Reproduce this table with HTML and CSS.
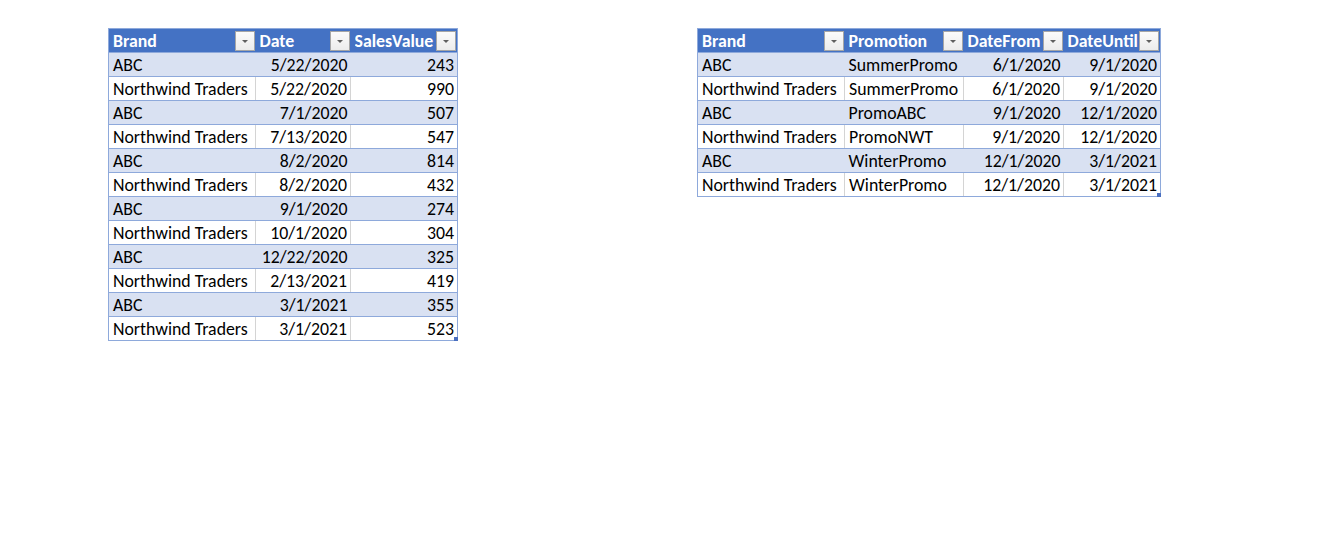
FILE: index.html
```html
<!DOCTYPE html>
<html>
<head>
<meta charset="utf-8">
<link rel="stylesheet" href="styles.css">
</head>
<body>
<div class="sheet">
  <div class="tbl-wrap t1">
    <table class="xl">
      <colgroup><col class="c147"><col class="c95"><col class="c107"></colgroup>
      <thead>
        <tr><th><span>Brand</span><i class="dd"></i></th><th><span>Date</span><i class="dd"></i></th><th><span>SalesValue</span><i class="dd"></i></th></tr>
      </thead>
      <tbody>
        <tr><td>ABC</td><td class="r">5/22/2020</td><td class="r">243</td></tr>
        <tr><td>Northwind Traders</td><td class="r">5/22/2020</td><td class="r">990</td></tr>
        <tr><td>ABC</td><td class="r">7/1/2020</td><td class="r">507</td></tr>
        <tr><td>Northwind Traders</td><td class="r">7/13/2020</td><td class="r">547</td></tr>
        <tr><td>ABC</td><td class="r">8/2/2020</td><td class="r">814</td></tr>
        <tr><td>Northwind Traders</td><td class="r">8/2/2020</td><td class="r">432</td></tr>
        <tr><td>ABC</td><td class="r">9/1/2020</td><td class="r">274</td></tr>
        <tr><td>Northwind Traders</td><td class="r">10/1/2020</td><td class="r">304</td></tr>
        <tr><td>ABC</td><td class="r">12/22/2020</td><td class="r">325</td></tr>
        <tr><td>Northwind Traders</td><td class="r">2/13/2021</td><td class="r">419</td></tr>
        <tr><td>ABC</td><td class="r">3/1/2021</td><td class="r">355</td></tr>
        <tr><td>Northwind Traders</td><td class="r">3/1/2021</td><td class="r">523</td></tr>
      </tbody>
    </table>
    <i class="handle"></i>
  </div>
  <div class="tbl-wrap t2">
    <table class="xl">
      <colgroup><col class="c147"><col class="c119"><col class="c100"><col class="c97"></colgroup>
      <thead>
        <tr><th><span>Brand</span><i class="dd"></i></th><th><span>Promotion</span><i class="dd"></i></th><th><span>DateFrom</span><i class="dd"></i></th><th><span>DateUntil</span><i class="dd"></i></th></tr>
      </thead>
      <tbody>
        <tr><td>ABC</td><td>SummerPromo</td><td class="r">6/1/2020</td><td class="r">9/1/2020</td></tr>
        <tr><td>Northwind Traders</td><td>SummerPromo</td><td class="r">6/1/2020</td><td class="r">9/1/2020</td></tr>
        <tr><td>ABC</td><td>PromoABC</td><td class="r">9/1/2020</td><td class="r">12/1/2020</td></tr>
        <tr><td>Northwind Traders</td><td>PromoNWT</td><td class="r">9/1/2020</td><td class="r">12/1/2020</td></tr>
        <tr><td>ABC</td><td>WinterPromo</td><td class="r">12/1/2020</td><td class="r">3/1/2021</td></tr>
        <tr><td>Northwind Traders</td><td>WinterPromo</td><td class="r">12/1/2020</td><td class="r">3/1/2021</td></tr>
      </tbody>
    </table>
    <i class="handle"></i>
  </div>
</div>
</body>
</html>
```
FILE: styles.css
```css
html, body {
  margin: 0;
  padding: 0;
  background: #ffffff;
}
.sheet {
  display: flex;
  align-items: flex-start;
  padding: 28px 0 0 108px;
  gap: 239px;
  font-family: Carlito, Calibri, "Open Sans", "Liberation Sans", sans-serif;
  font-size: 17.8px;
  color: #000;
}
.tbl-wrap {
  position: relative;
}
.xl {
  border-collapse: collapse;
  table-layout: fixed;
  border: 1px solid #8ea9db;
}
.c147 { width: 147px; }
.c95 { width: 95px; }
.c107 { width: 107px; }
.c119 { width: 119px; }
.c100 { width: 100px; }
.c97 { width: 97px; }
.xl th, .xl td {
  height: 23px;
  padding: 2px 3px 0 4px;
  white-space: nowrap;
  overflow: hidden;
  line-height: 21px;
  box-sizing: border-box;
}
.xl th {
  background: #4472c4;
  color: #fff;
  font-weight: bold;
  text-align: left;
  position: relative;
  padding: 1px 0 0 4px;
  line-height: 22px;
  border-bottom: 1px solid #8ea9db;
}
.xl th span {
  display: block;
  overflow: hidden;
  margin-right: 20px;
}
.dd {
  position: absolute;
  right: 1px;
  top: 2px;
  width: 20px;
  height: 20px;
  box-sizing: border-box;
  background: linear-gradient(#fbfbfb, #ececec);
  border: 1px solid #a6a6a6;
}
.dd::after {
  content: "";
  position: absolute;
  left: 6px;
  top: 8px;
  border-left: 3px solid transparent;
  border-right: 3px solid transparent;
  border-top: 3px solid #606060;
}
.xl td {
  border-top: 1px solid #8ea9db;
  border-bottom: 1px solid #8ea9db;
}
.xl tbody tr:nth-child(odd) td {
  background: #d9e1f2;
}
.xl tbody tr:nth-child(even) td + td {
  border-left: 1px solid #d4d4d4;
}
.xl td.r {
  text-align: right;
}
.handle {
  position: absolute;
  right: 0;
  bottom: 0;
  width: 4px;
  height: 4px;
  background: #4a6fc0;
}
```
